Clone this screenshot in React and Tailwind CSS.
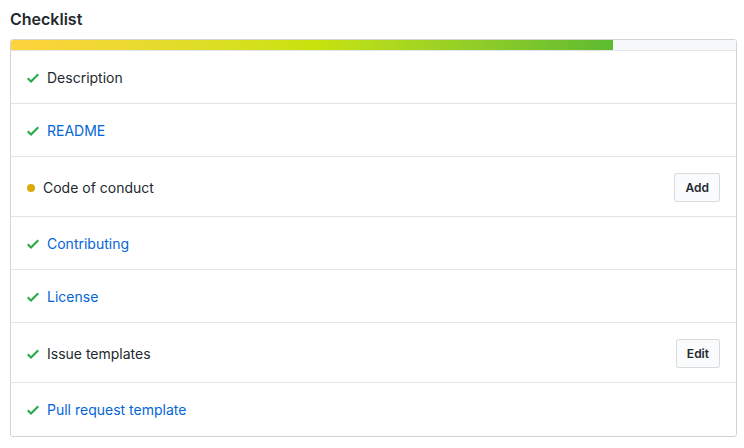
import React from 'react'

const items = [
  { label: 'Description', done: true, link: false },
  { label: 'README', done: true, link: true },
  { label: 'Code of conduct', done: false, link: false, action: 'Add' },
  { label: 'Contributing', done: true, link: true },
  { label: 'License', done: true, link: true },
  { label: 'Issue templates', done: true, link: false, action: 'Edit' },
  { label: 'Pull request template', done: true, link: true },
]

function Check() {
  return (
    <svg width="12" height="16" viewBox="0 0 12 16" className="shrink-0 fill-[#28a745]">
      <path fillRule="evenodd" d="M12 5l-8 8-4-4 1.5-1.5L4 10l6.5-6.5L12 5z" />
    </svg>
  )
}

export default function App() {
  const progress = 83

  return (
    <div className="w-[744px] h-[448px] bg-white px-[10px] pt-[8px] text-[14px] text-[#24292e] font-['Inter','Liberation_Sans',sans-serif]">
      <h2 className="text-[16px] font-semibold leading-[22px] mb-[9px]">Checklist</h2>

      <div className="w-[727px] border border-[#d1d5da] rounded-[3px] overflow-hidden">
        {/* progress bar */}
        <div className="h-[10px] bg-[#f6f8fa] border-b border-[#e1e4e8] box-content">
          <div
            className="h-full bg-gradient-to-r from-[#ffd33d] via-[#c8e30c] to-[#5cbb30]"
            style={{ width: `${progress}%` }}
          />
        </div>

        {items.map((it, i) => {
          const last = i === items.length - 1
          return (
            <div
              key={it.label}
              className={`flex items-center px-[16px] ${
                it.action ? 'pt-[16px] pb-[14px]' : last ? 'pt-[17px] pb-[16px]' : 'pt-[17px] pb-[15px]'
              } ${last ? '' : 'border-b border-[#e1e4e8]'}`}
            >
              {it.done ? (
                <Check />
              ) : (
                <span className="w-[8px] h-[8px] rounded-full bg-[#dbab09] shrink-0" />
              )}
              <span className={`ml-[8px] leading-[20px] ${it.link ? 'text-[#0366d6]' : ''}`}>
                {it.label}
              </span>
              {it.action && (
                <button className="ml-auto h-[29px] px-[10px] text-[12px] font-semibold leading-[20px] bg-[#fafbfc] border border-[rgba(27,31,35,0.15)] rounded-[3px] text-[#24292e]">
                  {it.action}
                </button>
              )}
            </div>
          )
        })}
      </div>
    </div>
  )
}
